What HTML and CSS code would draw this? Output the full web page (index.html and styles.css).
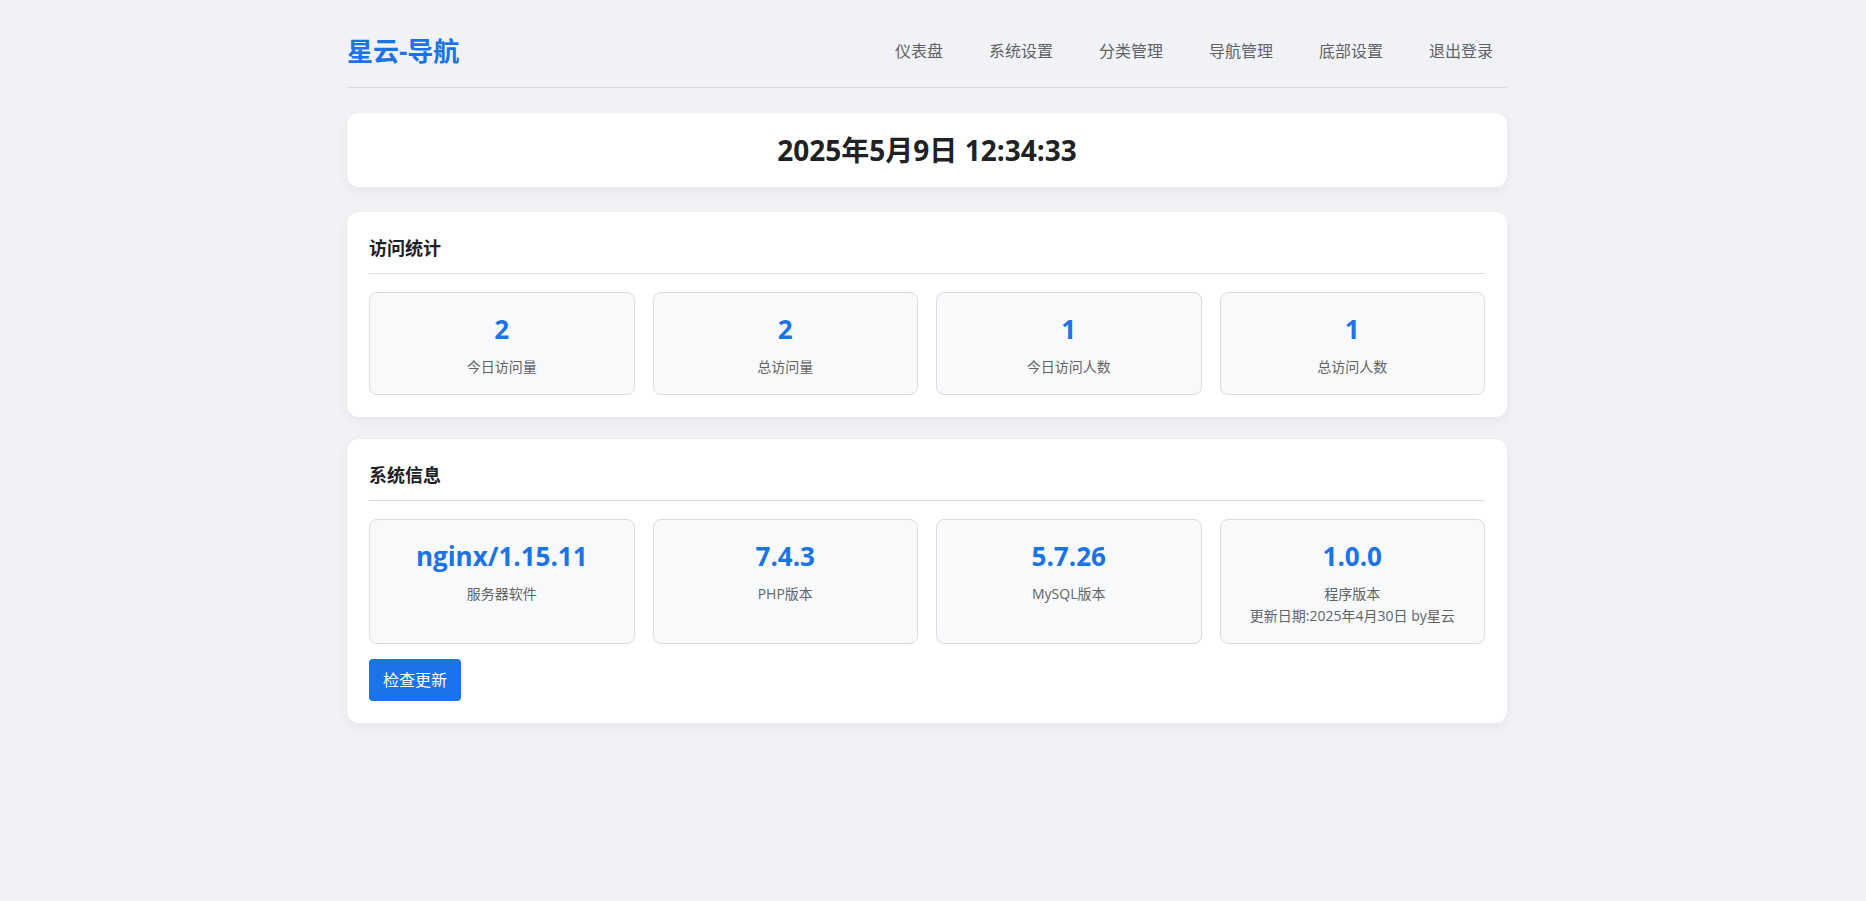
FILE: index.html
```html
<!DOCTYPE html>
<html lang="zh-CN">
<head>
  <meta charset="UTF-8">
  <meta name="viewport" content="width=device-width, initial-scale=1.0">
  <title>星云-导航</title>
  <link rel="stylesheet" href="styles.css">
</head>
<body>
  <div class="container">
    <header class="header">
      <h1 class="logo">星云-导航</h1>
      <nav class="nav">
        <a href="#">仪表盘</a>
        <a href="#">系统设置</a>
        <a href="#">分类管理</a>
        <a href="#">导航管理</a>
        <a href="#">底部设置</a>
        <a href="#">退出登录</a>
      </nav>
    </header>

    <div class="time-card">2025年5月9日 12:34:33</div>

    <section class="card">
      <h2 class="card-title">访问统计</h2>
      <div class="stats">
        <div class="stat">
          <div class="stat-value">2</div>
          <div class="stat-label">今日访问量</div>
        </div>
        <div class="stat">
          <div class="stat-value">2</div>
          <div class="stat-label">总访问量</div>
        </div>
        <div class="stat">
          <div class="stat-value">1</div>
          <div class="stat-label">今日访问人数</div>
        </div>
        <div class="stat">
          <div class="stat-value">1</div>
          <div class="stat-label">总访问人数</div>
        </div>
      </div>
    </section>

    <section class="card">
      <h2 class="card-title">系统信息</h2>
      <div class="stats">
        <div class="stat">
          <div class="stat-value">nginx/1.15.11</div>
          <div class="stat-label">服务器软件</div>
        </div>
        <div class="stat">
          <div class="stat-value">7.4.3</div>
          <div class="stat-label">PHP版本</div>
        </div>
        <div class="stat">
          <div class="stat-value">5.7.26</div>
          <div class="stat-label">MySQL版本</div>
        </div>
        <div class="stat">
          <div class="stat-value">1.0.0</div>
          <div class="stat-label">程序版本</div>
          <div class="stat-label">更新日期:2025年4月30日 by星云</div>
        </div>
      </div>
      <button type="button" class="btn">检查更新</button>
    </section>
  </div>
</body>
</html>
```

FILE: styles.css
```css
* {
  box-sizing: border-box;
  margin: 0;
  padding: 0;
}
body {
  background: #f0f2f5;
  color: #202124;
  font-family: "Segoe UI", "Open Sans", "Noto Sans CJK SC", sans-serif;
  font-size: 16px;
  line-height: 26px;
  /* room for the scrollbar */
  padding-right: 12px;
}
.container {
  max-width: 1200px;
  margin: 0 auto;
  padding: 20px;
}
.header {
  display: flex;
  justify-content: space-between;
  align-items: center;
  padding: 10px 0 15px;
  margin-bottom: 25px;
  border-bottom: 1px solid #dadce0;
}
.logo {
  color: #1a73e8;
  font-size: 26px;
  line-height: 42px;
}
.nav {
  display: flex;
  gap: 18px;
}
.nav a {
  color: #5f6368;
  text-decoration: none;
  padding: 0 14px;
}
.nav a:hover {
  color: #1a73e8;
}
.time-card,
.card {
  background: #fff;
  border-radius: 12px;
  box-shadow: 0 4px 12px rgba(0, 0, 0, 0.05);
}
.time-card {
  padding: 15px;
  margin-bottom: 25px;
  font-size: 28px;
  font-weight: bold;
  line-height: 44px;
  text-align: center;
}
.card {
  padding: 22px;
  margin-bottom: 22px;
}
.card-title {
  font-size: 18px;
  line-height: 29px;
  padding-bottom: 10px;
  margin-bottom: 18px;
  border-bottom: 1px solid #dadce0;
}
.stats {
  display: grid;
  grid-template-columns: repeat(4, 1fr);
  gap: 18px;
}
.stat {
  background: #f8f9fa;
  border: 1px solid #dadce0;
  border-radius: 8px;
  padding: 15px 15px 16px;
  text-align: center;
}
.stat-value {
  color: #1a73e8;
  font-size: 26px;
  font-weight: bold;
  line-height: 42px;
  margin-bottom: 6px;
}
.stat-label {
  color: #5f6368;
  font-size: 14px;
  line-height: 22px;
}
.btn {
  display: block;
  margin-top: 15px;
  padding: 8px 14px;
  background: #1a73e8;
  color: #fff;
  border: none;
  border-radius: 4px;
  font: inherit;
  cursor: pointer;
}
.btn:hover {
  background: #1765cc;
}
@media (max-width: 768px) {
  .header {
    flex-direction: column;
  }
  .nav {
    flex-wrap: wrap;
    justify-content: center;
  }
  .stats {
    grid-template-columns: repeat(2, 1fr);
  }
}
```
